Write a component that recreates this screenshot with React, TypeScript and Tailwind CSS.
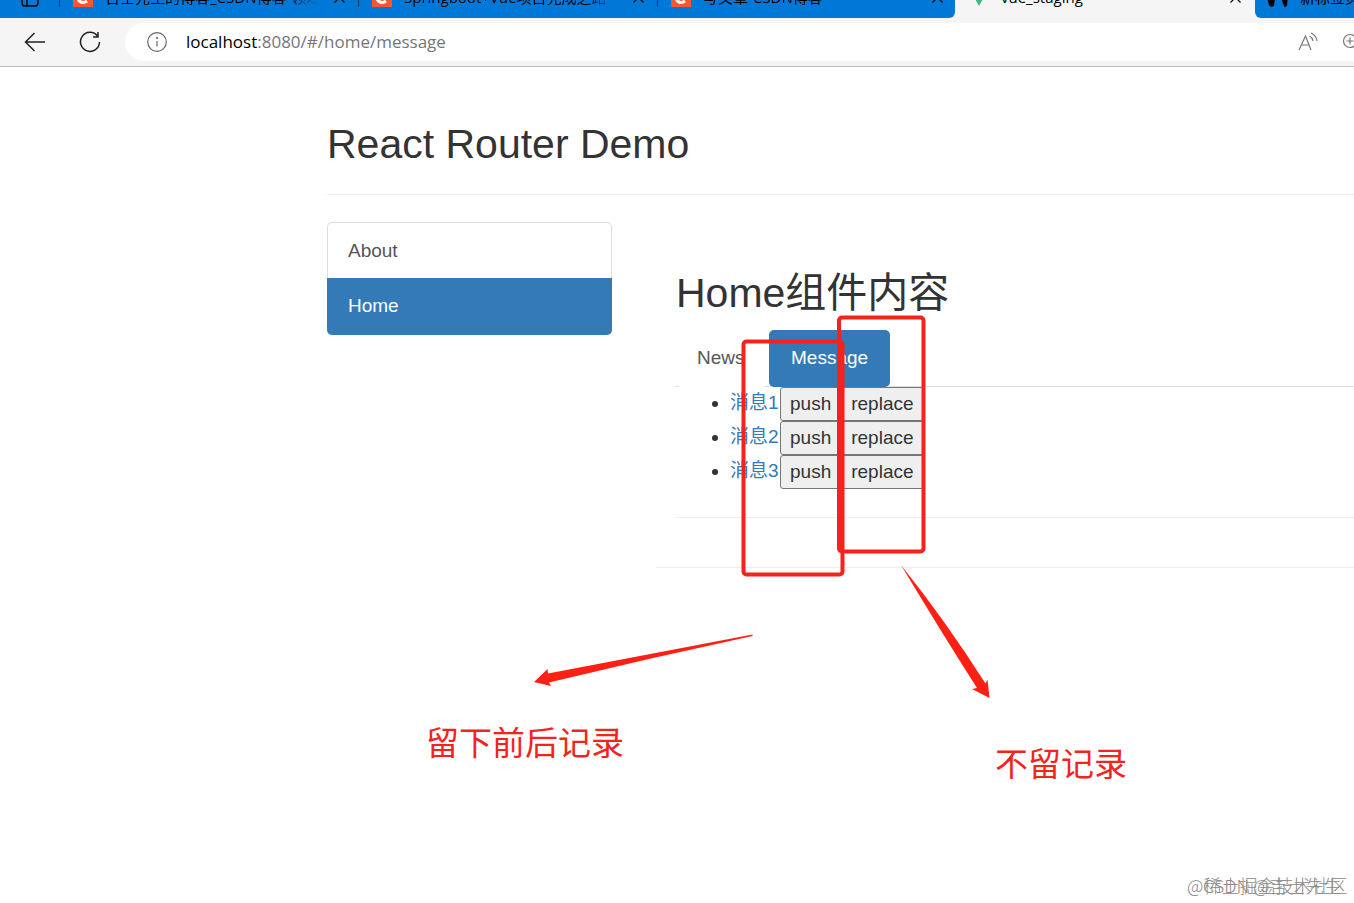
import type { ReactNode } from "react";

const blueTabs = [
  "吉士先生的博客_CSDN博客-领域博主",
  "Springboot+Vue项目完成之路（一）",
  "写文章-CSDN博客",
];

const messages = [
  { id: 1, title: "消息1" },
  { id: 2, title: "消息2" },
  { id: 3, title: "消息3" },
];

const uiFont = "font-['Open_Sans','Noto_Sans_CJK_SC',sans-serif]";

function CsdnIcon() {
  return (
    <svg className="shrink-0" width="20" height="20" viewBox="0 0 20 20">
      <rect width="20" height="20" fill="#fc5531" />
      <path d="M14.5 6.2C11 3.6 5.4 5 5 10.2c-.3 5 5.2 6.6 9 3.8" fill="none" stroke="#fff" strokeWidth="3" />
    </svg>
  );
}

function TabClose() {
  return (
    <button type="button" aria-label="Close tab" className="flex size-4 shrink-0 items-center justify-center">
      <svg width="11" height="11" viewBox="0 0 11 11" fill="none" stroke="currentColor" strokeWidth="1.2">
        <path d="M0.5 0.5l10 10M10.5 0.5l-10 10" />
      </svg>
    </button>
  );
}

function TabStrip() {
  return (
    <div className={`flex h-[18px] items-end overflow-hidden bg-[#f5f5f5] text-[15px] text-black ${uiFont}`}>
      <div className="flex h-[42px] w-[955px] shrink-0 items-center rounded-br-md bg-[#0078d7]">
        <button type="button" aria-label="Tab actions" className="flex w-[59px] shrink-0 justify-center">
          <svg width="18" height="20" viewBox="0 0 18 20" fill="none" stroke="currentColor" strokeWidth="1.4">
            <rect x="1" y="1" width="16" height="18" rx="3" />
            <path d="M1 6h16M6 6v13" />
          </svg>
        </button>
        {blueTabs.map((title) => (
          <div key={title} className="flex w-[299px] shrink-0 items-center">
            <span className="h-5 w-px bg-black/50" />
            <span className="w-[13px]" />
            <CsdnIcon />
            <span className="mx-3 w-[214px] shrink-0 overflow-hidden whitespace-nowrap [mask-image:linear-gradient(to_right,black_85%,transparent)]">
              {title}
            </span>
            <TabClose />
          </div>
        ))}
      </div>
      <div className="flex h-[42px] min-w-0 flex-1 items-center gap-3 px-3">
        <span className="pl-[2px]">
          <svg width="20" height="18" viewBox="0 0 20 18">
            <path d="M0 0h4l6 10.5L16 0h4L10 18z" fill="#41b883" />
            <path d="M4 0h4l2 3.5L12 0h4l-6 10.5z" fill="#35495e" />
          </svg>
        </span>
        <span className="flex-1 whitespace-nowrap">vue_staging</span>
        <TabClose />
      </div>
      <div className="flex h-[42px] w-[99px] shrink-0 items-center gap-3 overflow-hidden rounded-bl-md bg-[#0078d7] pl-3">
        <svg className="shrink-0" width="21" height="22" viewBox="0 0 21 22">
          <path d="M0 3h21v7l-1 10q-3 2-3 0l-3-8H8L7 20q-4 2-5-1L0 12z" />
        </svg>
        <span className="shrink-0 whitespace-nowrap">新标签页</span>
      </div>
    </div>
  );
}

function AddressBar() {
  return (
    <div className={`flex h-[49px] items-center border-b border-[#bdbdbd] bg-[#f5f5f5] pb-px ${uiFont}`}>
      <button type="button" aria-label="Back" className="ml-[23px] flex size-6 shrink-0 items-center justify-center">
        <svg width="22" height="20" viewBox="0 0 22 20" fill="none" stroke="#222" strokeWidth="1.5">
          <path d="M21 10H1.5M10.5 1L1.500 10l9 9" />
        </svg>
      </button>
      <button type="button" aria-label="Refresh" className="ml-[31px] flex size-6 shrink-0 items-center justify-center">
        <svg width="22" height="22" viewBox="0 0 22 22" fill="none" stroke="#222" strokeWidth="1.5">
          <path d="M18.5 5A9.500 9.500 0 1 0 20.500 11M19 1v5h-5" />
        </svg>
      </button>
      <div className="ml-[23px] flex h-[38px] flex-1 items-center overflow-hidden rounded-l-full bg-white pl-[22px]">
        <svg className="shrink-0" width="20" height="20" viewBox="0 0 20 20" fill="none" stroke="#666" strokeWidth="1.2">
          <circle cx="10" cy="10" r="9.3" />
          <path d="M10 9v5.5" />
          <circle cx="10" cy="6" r="0.5" />
        </svg>
        <a href="#/home/message" className="ml-[19px] flex-1 text-[17px] text-[#767676]">
          <span className="text-black">localhost</span>:8080/#/home/message
        </a>
        <button type="button" aria-label="Read aloud" className="shrink-0">
          <svg width="22" height="20" viewBox="0 0 22 20" fill="none" stroke="#777" strokeWidth="1.2">
            <path d="M1 18L7.500 4 13 18M3.500 13h7.500M11.500 4c2 1 3 2.500 3.500 5M13 1c3.500 1.500 5.500 4 6 8" />
          </svg>
        </button>
        <button type="button" aria-label="Zoom" className="ml-[22px] w-3 shrink-0 overflow-hidden">
          <svg width="20" height="20" viewBox="0 0 20 20" fill="none" stroke="#777" strokeWidth="1.2">
            <circle cx="8" cy="9" r="6.5" />
            <path d="M4.500 9h7M8 5.500v7M12.500 14l5 5" />
          </svg>
        </button>
      </div>
    </div>
  );
}

function DemoButton({ children }: { children: ReactNode }) {
  return (
    <button
      type="button"
      className="h-[34px] rounded-[3px] border border-[#767676] bg-[#efefef] px-[9px] leading-6 text-[#333]"
    >
      {children}
    </button>
  );
}

// Red boxes, arrows and notes drawn over the page
function Annotations() {
  return (
    <div className="pointer-events-none absolute left-0 top-0 h-[836px] w-[1354px] text-[#f5231b]">
      <svg className="absolute inset-0" width="1354" height="836" viewBox="0 67 1354 836" fill="none">
        <g stroke="#f5231b" strokeWidth="4">
          <rect x="743.5" y="341.5" width="99" height="233" rx="3" />
          <rect x="839" y="317.500" width="84.500" height="234" rx="3" />
        </g>
        <g fill="#ff2015">
          <path d="M752.500 634.500L548 673.500L547.500 669L534 682L551 686L549 682.500Q650 658 752.500 636z" />
          <path d="M901 565Q945 620 985.500 683.500L987.500 679.500L989.500 698L972 689L977 688Q940 630 901 565z" />
        </g>
      </svg>
      <p className="absolute left-[426px] top-[653px] text-[33px] leading-[48px]">留下前后记录</p>
      <p className="absolute left-[995px] top-[674px] text-[33px] leading-[48px]">不留记录</p>
    </div>
  );
}

export default function App() {
  return (
    <div className="relative min-h-screen overflow-hidden bg-white">
      <TabStrip />
      <AddressBar />
      <main className="relative pb-[260px] pt-[54px] font-['Liberation_Sans','Noto_Sans_CJK_SC',sans-serif] text-[19px] leading-[27px] text-[#333]">
        <header className="ml-[327px] border-b border-[#eee] pb-[26px]">
          <h1 className="text-[41px] leading-[47px]">React Router Demo</h1>
        </header>
        <div className="ml-[327px] mt-[27px] flex items-start">
          <nav className="w-[285px] shrink-0">
            <a href="#/about" className="block rounded-t-[5px] border border-b-0 border-[#ddd] px-5 py-[14px] text-[#555]">
              About
            </a>
            <a href="#/home" className="block rounded-b-[5px] bg-[#337ab7] px-[21px] pb-4 pt-[14px] text-white">
              Home
            </a>
          </nav>
          <section className="ml-11 flex-1 border-b border-[#eee] pb-[49px] pt-12">
            <div className="ml-5">
              <h2 className="text-[41px] leading-[47px]">Home组件内容</h2>
              <div className="mt-[13px] flex border-b border-[#ddd] pl-[3px] leading-[26px]">
                <a href="#/home/news" className="-mb-px mr-1 w-[86px] bg-white py-[15px] pl-[18px] text-[#555]">News</a>
                <a href="#/home/message" className="-mb-px rounded-[5px] bg-[#337ab7] px-[22px] pb-4 pt-[15px] text-white">
                  Message
                </a>
              </div>
              <ul className="list-disc border-b border-[#eee] pb-7 pl-[54px]">
                {messages.map((m) => (
                  <li key={m.id} className="h-[34px]">
                    <div className="flex items-start leading-8">
                      <a href={`#/home/message/${m.id}`} className="w-[50px] whitespace-nowrap text-[#337ab7]">
                        {m.title}
                      </a>
                      <DemoButton>push</DemoButton>
                      <DemoButton>replace</DemoButton>
                    </div>
                  </li>
                ))}
              </ul>
            </div>
          </section>
        </div>
        <Annotations />
      </main>
      {/* Two watermarks stamped on the same corner */}
      <footer className="absolute bottom-0 right-0 h-[30px] w-[167px] whitespace-nowrap font-['Noto_Sans_CJK_SC',sans-serif] text-[18px] font-light leading-6 text-[#8a8a8a]">
        <span className="absolute left-0 top-0">@稀土掘金技术社区</span>
        <span className="absolute left-4 top-0">CSDN @吉士先生</span>
      </footer>
    </div>
  );
}
